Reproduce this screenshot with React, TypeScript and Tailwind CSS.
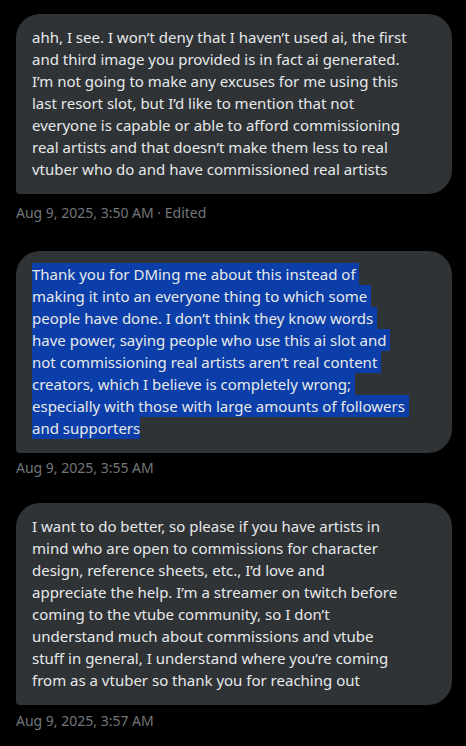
const font = { fontFamily: '"Noto Sans", "Open Sans", sans-serif' };

const first = [
  "ahh, I see. I won’t deny that I haven’t used ai, the first",
  "and third image you provided is in fact ai generated.",
  "I’m not going to make any excuses for me using this",
  "last resort slot, but I’d like to mention that not",
  "everyone is capable or able to afford commissioning",
  "real artists and that doesn’t make them less to real",
  "vtuber who do and have commissioned real artists",
];

const second = [
  "Thank you for DMing me about this instead of ",
  "making it into an everyone thing to which some ",
  "people have done. I don’t think they know words ",
  "have power, saying people who use this ai slot and ",
  "not commissioning real artists aren’t real content ",
  "creators, which I believe is completely wrong; ",
  "especially with those with large amounts of followers ",
  "and supporters",
];

const third = [
  "I want to do better, so please if you have artists in",
  "mind who are open to commissions for character",
  "design, reference sheets, etc., I’d love and",
  "appreciate the help. I’m a streamer on twitch before",
  "coming to the vtube community, so I don’t",
  "understand much about commissions and vtube",
  "stuff in general, I understand where you’re coming",
  "from as a vtuber so thank you for reaching out",
];

function Bubble({ lines, selected = false, className = "" }: { lines: string[]; selected?: boolean; className?: string }) {
  return (
    <div className={`w-[436px] rounded-3xl rounded-bl-[4px] bg-[#2f3336] px-4 pt-3 pb-[14px] ${className}`}>
      {lines.map((line, i) => (
        <div
          key={i}
          className={`w-fit whitespace-pre text-[15px] leading-[22px] text-[#e7e9ea] ${selected ? "bg-[#0b3ea8]" : ""}`}
        >
          {line}
        </div>
      ))}
    </div>
  );
}

function Stamp({ children, className = "" }: { children: React.ReactNode; className?: string }) {
  return <div className={`text-[14px] leading-4 text-[#71767b] ${className}`}>{children}</div>;
}

export default function App() {
  return (
    <div className="min-h-[746px] w-[466px] bg-black pt-[14px] pl-4" style={font}>
      <Bubble lines={first} />
      <Stamp className="mt-[11px]">Aug 9, 2025, 3:50 AM · Edited</Stamp>

      <Bubble lines={second} selected className="mt-[30px]" />
      <Stamp className="mt-[7px]">Aug 9, 2025, 3:55 AM</Stamp>

      <Bubble lines={third} className="mt-[27px]" />
      <Stamp className="mt-2">Aug 9, 2025, 3:57 AM</Stamp>
    </div>
  );
}
